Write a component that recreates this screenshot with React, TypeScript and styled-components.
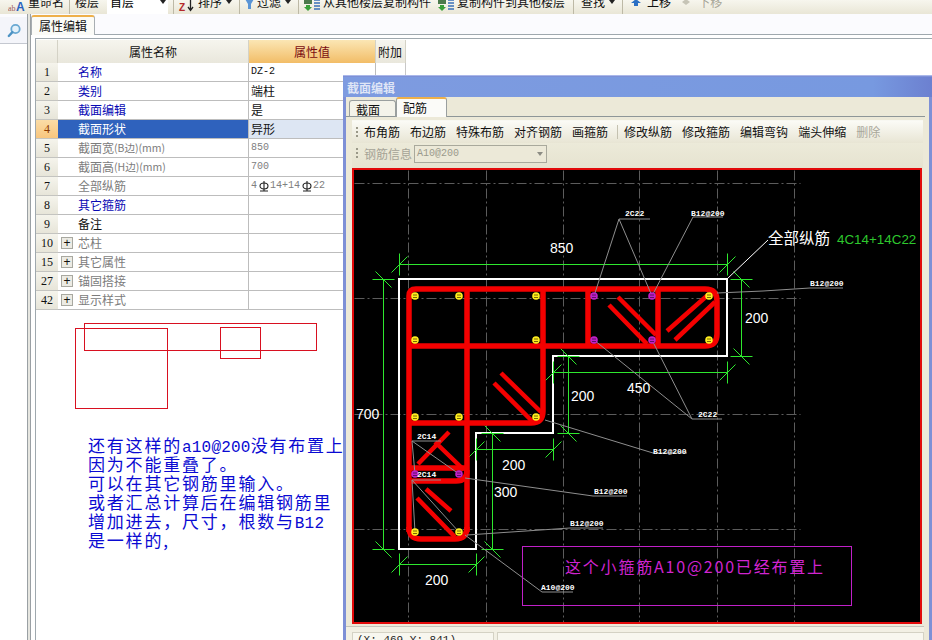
import React from "react";
import styled, { createGlobalStyle } from "styled-components";

const CJK = `"Noto Sans CJK SC", "Liberation Sans", sans-serif`;
const MONO = `"Liberation Mono", "Noto Sans CJK SC", monospace`;

const Global = createGlobalStyle`
  html, body { margin: 0; padding: 0; background: #fff; }
  body { font-family: ${CJK}; font-size: 12px; color: #000; }
  #root { width: 932px; height: 640px; overflow: hidden; }
  * { box-sizing: border-box; }
`;

const Page = styled.div`
  position: relative;
  width: 932px;
  height: 640px;
  overflow: hidden;
  display: flex;
  flex-direction: column;
  background: #fff;
`;

/* ---------- top toolbar (cut off by the top edge of the shot) ---------- */
const TopBar = styled.div`
  flex: none;
  height: 14px;
  display: flex;
  align-items: flex-end;
  overflow: hidden;
  background: linear-gradient(#f7f6ee, #e9e6d6);
`;
const ToolItem = styled.div<{ $ml: number; $off?: boolean }>`
  flex: none;
  height: 24px;
  margin-left: ${(p) => p.$ml}px;
  display: flex;
  align-items: center;
  gap: 3px;
  white-space: nowrap;
  font-size: 12px;
  line-height: 24px;
  color: ${(p) => (p.$off ? "#a8a698" : "#111")};
`;
const ToolSep = styled.div<{ $ml: number }>`
  flex: none;
  width: 1px;
  height: 24px;
  margin-left: ${(p) => p.$ml}px;
  background: #bdb9a6;
`;
const FloorSelect = styled.div`
  flex: none;
  width: 61px;
  height: 24px;
  margin-left: 8px;
  padding-left: 3px;
  background: #fff;
  display: flex;
  align-items: center;
  justify-content: space-between;
  line-height: 24px;
`;
const Caret = styled.span`
  display: inline-block;
  width: 0;
  height: 0;
  margin: 0 2px 0 1px;
  border-left: 3px solid transparent;
  border-right: 3px solid transparent;
  border-top: 4px solid #222;
`;
const ToolLabel = styled.span<{ $gap?: number }>`
  margin-left: ${(p) => p.$gap ?? 0}px;
`;

/* ---------- tab band and body ---------- */
const Body = styled.div`
  flex: 1;
  display: flex;
  min-height: 0;
`;
const SideRail = styled.div`
  flex: none;
  width: 27px;
  background: #fff;
  padding-top: 3px;
  background-image: linear-gradient(#fbfbfe, #fbfbfe);
  background-size: 100% 3px;
  background-repeat: no-repeat;
`;
const SearchBtn = styled.div`
  height: 27px;
  background: #f4f5fa;
  border-bottom: 1px solid #c4c8d0;
  display: flex;
  align-items: center;
  justify-content: center;
  padding-left: 2px;
`;
const RailGap = styled.div`
  flex: none;
  width: 4px;
  background: #e6e6e0;
  border-left: 1px solid #9aa0a4;
  border-right: 1px solid #9aa0a4;
`;
const Workspace = styled.div`
  flex: 1;
  min-width: 0;
  display: flex;
  flex-direction: column;
`;
const TabBand = styled.div`
  flex: none;
  height: 21px;
  padding-top: 1px;
  background: #fbfbfe;
  border-bottom: 1px solid #9fa8ae;
`;
const SheetTab = styled.div`
  width: 64px;
  height: 20px;
  border: 1px solid #a8aeb2;
  border-top: 2px solid #eeb04a;
  border-bottom: none;
  border-radius: 3px 3px 0 0;
  background: #fbfbf7;
  padding-left: 7px;
  font-size: 12px;
  line-height: 17px;
  color: #111;
`;
const Sheet = styled.div`
  flex: 1;
  min-height: 0;
  margin-top: 3px;
  margin-left: 4px;
  border-top: 1px solid #9fa8ae;
  border-left: 1px solid #9fa8ae;
  padding-top: 1px;
  background: #fff;
`;

/* ---------- property grid ---------- */
const Columns = styled.div`
  display: grid;
  grid-template-columns: 22px 191px 127px 30px;
  width: 370px;
`;
const HeaderCell = styled.div<{ $active?: boolean; $left?: boolean }>`
  height: 23px;
  display: flex;
  align-items: center;
  justify-content: ${(p) => (p.$left ? "flex-start" : "center")};
  padding-left: ${(p) => (p.$left ? "2px" : "0")};
  font-size: 12px;
  border-right: 1px solid #d4d2c6;
  color: ${(p) => (p.$active ? "#7a0c10" : "#111")};
  background: ${(p) =>
    p.$active
      ? "linear-gradient(#fbe6b4, #f2bd67)"
      : "linear-gradient(#f6f5ee, #e9e7dc)"};
`;
const Row = styled(Columns)`
  height: 19px;
`;
const NumCell = styled.div<{ $on?: boolean }>`
  font-family: "Liberation Serif", serif;
  font-size: 12px;
  line-height: 18px;
  text-align: center;
  color: ${(p) => (p.$on ? "#8a3a00" : "#111")};
  background: ${(p) =>
    p.$on
      ? "linear-gradient(#fbdca6, #f8c67e)"
      : "linear-gradient(#f5f4ec, #e7e5d9)"};
  border-bottom: 1px solid #c4c4c0;
`;
const NameCell = styled.div<{ $tone: string; $on?: boolean }>`
  display: flex;
  align-items: center;
  padding-left: 3px;
  font-size: 12px;
  line-height: 18px;
  white-space: nowrap;
  border-bottom: 1px solid #bdbdbd;
  border-right: 1px solid #bdbdbd;
  color: ${(p) => (p.$on ? "#fff" : p.$tone)};
  background: ${(p) => (p.$on ? "#2f62bd" : "#fff")};
`;
const NameSuffix = styled.span`
  font-size: 10.5px;
`;
const Expander = styled.span`
  flex: none;
  width: 12px;
  height: 12px;
  margin-right: 5px;
  border: 1px solid #a8a8a0;
  background: #ecebe4;
  display: flex;
  align-items: center;
  justify-content: center;
  font-family: "Liberation Sans", sans-serif;
  font-size: 12px;
  line-height: 10px;
  color: #111;
`;
const NoExpander = styled.span`
  flex: none;
  width: 17px;
`;
const ValueCell = styled.div<{ $muted?: boolean; $on?: boolean }>`
  display: flex;
  align-items: center;
  padding-left: 2px;
  font-family: ${MONO};
  font-size: 10px;
  line-height: 18px;
  white-space: nowrap;
  border-bottom: 1px solid #bdbdbd;
  border-right: 1px solid #bdbdbd;
  color: ${(p) => (p.$muted ? "#808080" : "#111")};
  background: ${(p) => (p.$on ? "#dde6f3" : "#fff")};
`;
const CjkValue = styled.span`
  font-family: ${CJK};
  font-size: 12px;
`;
const ExtraCell = styled.div`
  border-right: 1px solid #c8c8c8;
  border-bottom: 1px solid #c8c8c8;
`;

/* ---------- annotation under the grid ---------- */
const Scribbles = styled.svg`
  display: block;
  margin: 12px 0 0 39px;
`;
const Note = styled.div`
  margin: 26px 0 0 52px;
  font-family: ${CJK};
  font-size: 17px;
  letter-spacing: 1.8px;
  color: #0a0ad2;
  white-space: nowrap;
`;
const NoteLine = styled.div`
  height: 19px;
  line-height: 19px;
`;
const NoteLatin = styled.span`
  font-family: ${MONO};
  font-size: 16px;
  line-height: 0;
  letter-spacing: 0.2px;
`;

/* ---------- floating section editor window ---------- */
const EditorWindow = styled.div`
  position: absolute;
  left: 343px;
  top: 75px;
  width: 589px;
  height: 565px;
  display: flex;
  flex-direction: column;
  overflow: hidden;
  background: #7e90d6;
  padding: 1px 3px 0 3px;
  border-top: 1px solid #aab8ea;
`;
const TitleBar = styled.div`
  flex: none;
  height: 20px;
  margin: 0 -3px;
  padding-left: 4px;
  font-size: 12px;
  font-weight: 700;
  line-height: 22px;
  color: #dfe5f6;
  background: linear-gradient(90deg, #7e9be0 0%, #7799e0 90%, #6c80d0 100%);
`;
const WindowFace = styled.div`
  flex: 1;
  min-height: 0;
  background: #ece9d8;
  padding-right: 3px;
  display: flex;
  flex-direction: column;
`;
const TabStrip = styled.div`
  flex: none;
  height: 20px;
  display: flex;
  align-items: flex-end;
  padding-left: 3px;
  border-bottom: 1px solid #8e9698;
  margin-right: 1px;
`;
const EditorTab = styled.div<{ $on?: boolean }>`
  height: ${(p) => (p.$on ? 20 : 17)}px;
  width: ${(p) => (p.$on ? 51 : 47)}px;
  margin-bottom: -1px;
  padding-left: 6px;
  font-size: 12px;
  line-height: 17px;
  border: 1px solid #9a9f9f;
  border-bottom: ${(p) => (p.$on ? "none" : "1px solid #8e9698")};
  border-top: ${(p) => (p.$on ? "2px solid #eeb04a" : "1px solid #9a9f9f")};
  border-radius: 3px 3px 0 0;
  background: ${(p) => (p.$on ? "#fbfbf8" : "#f4f3ea")};
  color: #111;
`;
const TabPanel = styled.div`
  flex: 1;
  min-height: 0;
  padding: 3px 2px 0 6px;
  background: #ece9d8;
  display: flex;
  flex-direction: column;
`;
const EditorBar = styled.div`
  flex: none;
  height: 23px;
  margin-right: 1px;
  padding-left: 4px;
  display: flex;
  align-items: center;
  background: linear-gradient(#fbfbf6, #e8e5d4);
  border-top: 1px solid #f8f8f2;
`;
const Grip = styled.span`
  flex: none;
  width: 2px;
  height: 13px;
  margin-right: 6px;
  background-image: radial-gradient(circle, #9a9888 1px, transparent 1.1px);
  background-size: 2px 4px;
`;
const BarButton = styled.span<{ $off?: boolean }>`
  flex: none;
  margin-right: 10px;
  font-size: 12px;
  line-height: 20px;
  color: ${(p) => (p.$off ? "#a9a79a" : "#111")};
`;
const BarSep = styled.span`
  flex: none;
  width: 1px;
  height: 14px;
  margin: 0 6px 0 -1px;
  background: #c4c1b0;
`;
const InfoBar = styled.div`
  flex: none;
  height: 25px;
  margin-right: 1px;
  padding: 0 0 4px 4px;
  display: flex;
  align-items: center;
  background: linear-gradient(#ecead9, #e6e3d0);
`;
const InfoLabel = styled.span`
  flex: none;
  width: 50px;
  font-size: 12px;
  color: #a5a396;
`;
const InfoField = styled.div`
  flex: none;
  width: 133px;
  height: 18px;
  padding: 0 3px 0 2px;
  border: 1px solid #a9a99c;
  display: flex;
  align-items: center;
  justify-content: space-between;
  font-family: ${MONO};
  font-size: 10px;
  color: #9a9a8c;
  background: #ece9d8;
`;
const GreyCaret = styled.span`
  width: 0;
  height: 0;
  border-left: 3px solid transparent;
  border-right: 3px solid transparent;
  border-top: 4px solid #8c8c84;
`;
const CanvasFrame = styled.div`
  flex: none;
  width: 570px;
  height: 456px;
  border: 2px solid #e20a0a;
  background: #000;
`;
const CanvasSvg = styled.svg`
  display: block;
`;
const StatusRow = styled.div`
  flex: none;
  height: 16px;
  margin: 2px 0 0 -6px;
  padding: 5px 0 0 6px;
  border-top: 1px solid #c4c4bc;
  display: flex;
  gap: 3px;
  background: #f2f0e4;
`;
const StatusCell = styled.div<{ $grow?: boolean }>`
  ${(p) => (p.$grow ? "flex: 1;" : "flex: none; width: 142px;")}
  height: 20px;
  padding: 1px 0 0 4px;
  font-family: ${MONO};
  font-size: 11px;
  line-height: 12px;
  color: #222;
  border: 1px solid #d4d2c4;
  background: #f8f7ef;
`;
const RebarGlyph = styled.svg`
  flex: none;
  margin: 0 1px 0 2px;
`;

/* ---------- drawing of the toolbar icons (only their lower part shows) ---------- */
const RenameIcon = () => (
  <svg width="17" height="24" viewBox="0 0 17 24">
    <text x="0" y="21" fontSize="8" fill="#a05a5a" fontFamily="Liberation Serif">ab</text>
    <text x="8" y="21" fontSize="12" fontWeight="700" fill="#2a62c0" fontFamily="Liberation Sans">A</text>
  </svg>
);
const SortIcon = () => (
  <svg width="17" height="24" viewBox="0 0 17 24">
    <text x="1" y="21" fontSize="10" fontWeight="700" fill="#b42a2a" fontFamily="Liberation Sans">Z</text>
    <path d="M12.5 8V20M10 17l2.5 3.5L15 17" stroke="#222" strokeWidth="1.3" fill="none" />
  </svg>
);
const FunnelIcon = () => (
  <svg width="9" height="24" viewBox="0 0 9 24">
    <path d="M0 9H9L6 14V19H3V14Z" fill="#5b95d6" />
  </svg>
);
const CopyIcon = () => (
  <svg width="16" height="24" viewBox="0 0 16 24">
    <rect x="0" y="9" width="8" height="5" fill="#4c7a4c" />
    <path d="M2 15h4v2h2l-4 4-4-4h2z" fill="#3aa03a" />
    <path d="M10 10h6M10 13h6M10 16h6M10 19h6" stroke="#3a70b8" strokeWidth="1.6" />
  </svg>
);
const UpIcon = () => (
  <svg width="10" height="24" viewBox="0 0 10 24">
    <path d="M5 9L10 13H7V16H3V13H0Z" fill="#2a6fc4" />
  </svg>
);
const DownIcon = () => (
  <svg width="8" height="24" viewBox="0 0 8 24">
    <path d="M4 9L8 12L4 15L0 12Z" fill="#c6c4b6" />
  </svg>
);
const LensIcon = () => (
  <svg width="15" height="15" viewBox="0 0 15 15">
    <circle cx="8.5" cy="6" r="4.2" fill="#e4f1fa" stroke="#69a8d2" strokeWidth="1.8" />
    <path d="M5.4 9.2L1.8 13" stroke="#4d93c4" strokeWidth="2.4" strokeLinecap="round" />
  </svg>
);
const RebarMark = () => (
  <RebarGlyph width="10" height="11" viewBox="0 0 10 11">
    <ellipse cx="5" cy="5" rx="4" ry="3" fill="none" stroke="#222" strokeWidth="1.1" />
    <path d="M5 0V10M1 10H9" stroke="#222" strokeWidth="1.1" />
  </RebarGlyph>
);

/* ---------- data ---------- */
const BLUE = "#0808b4";
const GREY = "#7c7c7c";
const rows = [
  { n: "1", name: "名称", tone: BLUE, val: "DZ-2" },
  { n: "2", name: "类别", tone: BLUE, val: "端柱", cjk: true },
  { n: "3", name: "截面编辑", tone: BLUE, val: "是", cjk: true },
  { n: "4", name: "截面形状", tone: BLUE, val: "异形", cjk: true, on: true },
  { n: "5", name: "截面宽", suffix: "(B边)(mm)", tone: GREY, val: "850", muted: true },
  { n: "6", name: "截面高", suffix: "(H边)(mm)", tone: GREY, val: "700", muted: true },
  { n: "7", name: "全部纵筋", tone: GREY, val: "rebar", muted: true },
  { n: "8", name: "其它箍筋", tone: BLUE, val: "" },
  { n: "9", name: "备注", tone: "#111", val: "" },
  { n: "10", name: "芯柱", tone: GREY, val: "", group: true },
  { n: "15", name: "其它属性", tone: GREY, val: "", group: true },
  { n: "27", name: "锚固搭接", tone: GREY, val: "", group: true },
  { n: "42", name: "显示样式", tone: GREY, val: "", group: true },
];

const leftButtons = ["布角筋", "布边筋", "特殊布筋", "对齐钢筋", "画箍筋"];
const rightButtons = ["修改纵筋", "修改箍筋", "编辑弯钩", "端头伸缩"];

/* ---------- the CAD drawing, in page coordinates ---------- */
const G = "#2ee82e";
const hDims: [number, number, number][] = [
  [399, 727, 264],
  [553, 727, 372],
  [476, 553, 449],
  [399, 476, 564],
];
const vDims: [number, number, number][] = [
  [383, 279, 549],
  [741, 279, 356],
  [568, 356, 433],
  [492, 433, 549],
];
const dimTexts: [string, number, number][] = [
  ["850", 550, 253],
  ["200", 745, 323],
  ["200", 571, 401],
  ["450", 627, 393],
  ["700", 356, 419],
  ["200", 502, 470],
  ["300", 494, 497],
  ["200", 425, 585],
];
const leaders: string[] = [
  "M594 296L619 219M652 296L619 219M619 219H650",
  "M652 296L693 217H723",
  "M717 293L763 291L810 288H843",
  "M594 340L692 419H722M652 340L692 419",
  "M545 420L653 453H687",
  "M465 478L593 496H627",
  "M467 535L570 528H603",
  "M465 535L542 592H573",
  "M412 441H441M412 441L459 474M412 441L415 474",
  "M412 480H441M412 480L415 532M412 480L459 532",
];
const labels: [string, number, number][] = [
  ["2C22", 625, 216],
  ["B12@200", 691, 216],
  ["B12@200", 810, 286],
  ["2C22", 698, 417],
  ["B12@200", 653, 454],
  ["B12@200", 594, 494],
  ["B12@200", 570, 526],
  ["A10@200", 541, 590],
  ["2C14", 417, 439],
  ["2C14", 417, 477],
];
const yellow: [number, number][] = [
  [415, 296], [459, 296], [536, 296], [709, 296],
  [415, 340], [536, 340], [709, 340],
  [415, 417], [459, 417], [536, 417],
  [415, 532], [459, 532],
];
const purple: [number, number][] = [
  [594, 296], [652, 296], [594, 340], [652, 340], [415, 474], [459, 474],
];

const CadDrawing = () => (
  <CanvasSvg width="566" height="452" viewBox="354 170 566 452">
    {/* grid */}
    <g stroke="#5c5c5c" strokeWidth="1" strokeDasharray="10 3 2 3" fill="none" transform="translate(0.5 0.5)">
      {[408, 486, 563, 639, 717, 794].map((x) => (
        <line key={x} x1={x} y1="170" x2={x} y2="622" />
      ))}
      {[183, 298, 414, 529].map((y) => (
        <line key={y} x1="354" y1={y} x2="800" y2={y} />
      ))}
    </g>

    {/* concrete outline */}
    <path
      d="M399 279H727V356H553V433H476V549H399Z"
      fill="none"
      stroke="#fff"
      strokeWidth="2"
      strokeLinejoin="miter"
    />

    {/* dimension lines */}
    <g stroke={G} strokeWidth="1" fill="none" transform="translate(0.5 0.5)">
      {hDims.map(([a, b, y]) => (
        <g key={`h${a}${y}`}>
          <line x1={a} y1={y} x2={b} y2={y} />
          {[a, b].map((x) => (
            <path key={x} d={`M${x} ${y - 11}V${y + 11}M${x - 8} ${y + 8}L${x + 8} ${y - 8}`} />
          ))}
        </g>
      ))}
      {vDims.map(([x, a, b]) => (
        <g key={`v${x}`}>
          <line x1={x} y1={a} x2={x} y2={b} />
          {[a, b].map((y) => (
            <path key={y} d={`M${x - 11} ${y}H${x + 11}M${x - 8} ${y - 8}L${x + 8} ${y + 8}`} />
          ))}
        </g>
      ))}
    </g>

    {/* stirrups */}
    <g stroke="#f40000" strokeWidth="5.5" fill="none" strokeLinejoin="round">
      <path d="M409 532V296Q409 289 416 289H705Q717 289 717 301V334Q717 346 705 346H409" />
      <path d="M467 289V532" />
      <path d="M543 289V411Q543 423 531 423H409" />
      <path d="M588 289V346M658 289V346" />
      <path d="M409 527Q409 539 421 539H455Q467 539 467 527" />
      <path d="M409 468H465" />
      <path d="M409 481H456Q467 481 467 470" />
    </g>
    <g stroke="#f40000" strokeWidth="4.5" fill="none">
      <path d="M501 373L541 412M494 383L532 421" />
      <path d="M618 297L656 335M609 305L647 344" />
      <path d="M667 331L709 294M675 340L715 302" />
      <path d="M449 432L418 464M435 442L464 470" />
      <path d="M426 489L451 511M417 498L455 537" />
    </g>

    {/* leaders */}
    <g stroke="#8e8e8e" strokeWidth="1" fill="none">
      {leaders.map((d) => (
        <path key={d} d={d} />
      ))}
    </g>
    <path d="M727 279L768 240" stroke="#fff" strokeWidth="1" fill="none" />

    {/* rebars */}
    {yellow.map(([x, y]) => (
      <g key={`y${x}${y}`}>
        <circle cx={x} cy={y} r="3.8" fill="#ffee1e" />
        <path d={`M${x - 2} ${y - 1}H${x + 2}M${x - 2} ${y + 1.5}H${x + 2}`} stroke="#6a5a00" strokeWidth="0.9" />
      </g>
    ))}
    {purple.map(([x, y]) => (
      <g key={`p${x}${y}`}>
        <circle cx={x} cy={y} r="3.8" fill="#c020c8" />
        <path d={`M${x - 2} ${y - 1}H${x + 2}M${x - 2} ${y + 1.5}H${x + 2}`} stroke="#50105a" strokeWidth="0.9" />
      </g>
    ))}

    {/* labels */}
    <g fill="#fff" fontFamily="Liberation Mono, monospace" fontSize="8" fontWeight="700">
      {labels.map(([t, x, y]) => (
        <text key={`${t}${x}${y}`} x={x} y={y}>
          {t}
        </text>
      ))}
    </g>
    <g fill="#fff" fontFamily="Liberation Sans, sans-serif" fontSize="14">
      {dimTexts.map(([t, x, y]) => (
        <text key={`${t}${x}${y}`} x={x} y={y}>
          {t}
        </text>
      ))}
    </g>
    <text x="768" y="244" fill="#fff" fontFamily="Noto Sans CJK SC, sans-serif" fontSize="15.5">
      全部纵筋
    </text>
    <text x="837" y="244" fill="#2ec82e" fontFamily="Liberation Sans, sans-serif" fontSize="13.4">
      4C14+14C22
    </text>

    {/* magenta remark */}
    <rect x="522.5" y="546.5" width="329" height="59" fill="none" stroke="#c020c8" strokeWidth="1" />
    <text
      x="565"
      y="573"
      fill="#d024d0"
      fontFamily="Noto Sans CJK SC, sans-serif"
      fontSize="16"
      letterSpacing="1.8"
    >
      这个小箍筋A10@200已经布置上
    </text>
  </CanvasSvg>
);

export default function App() {
  return (
    <Page>
      <Global />
      <TopBar>
        <ToolItem $ml={8}><RenameIcon /><span>重命名</span></ToolItem>
        <ToolSep $ml={5} />
        <ToolItem $ml={5}>楼层</ToolItem>
        <FloorSelect>首层<Caret /></FloorSelect>
        <ToolSep $ml={5} />
        <ToolItem $ml={4}><SortIcon /><span>排序</span><Caret /></ToolItem>
        <ToolSep $ml={5} />
        <ToolItem $ml={5}><FunnelIcon /><span>过滤</span><Caret /></ToolItem>
        <ToolSep $ml={5} />
        <ToolItem $ml={5}><CopyIcon /><span>从其他楼层复制构件</span></ToolItem>
        <ToolItem $ml={7}><CopyIcon /><span>复制构件到其他楼层</span></ToolItem>
        <ToolSep $ml={8} />
        <ToolItem $ml={7}><span>查找</span><Caret /></ToolItem>
        <ToolSep $ml={5} />
        <ToolItem $ml={8}><UpIcon /><ToolLabel $gap={3}>上移</ToolLabel></ToolItem>
        <ToolItem $ml={11} $off><DownIcon /><ToolLabel $gap={5}>下移</ToolLabel></ToolItem>
      </TopBar>

      <Body>
        <SideRail>
          <SearchBtn><LensIcon /></SearchBtn>
        </SideRail>
        <RailGap />
        <Workspace>
          <TabBand>
            <SheetTab>属性编辑</SheetTab>
          </TabBand>
          <Sheet>
            <Columns>
              <HeaderCell />
              <HeaderCell>属性名称</HeaderCell>
              <HeaderCell $active>属性值</HeaderCell>
              <HeaderCell $left>附加</HeaderCell>
            </Columns>
            {rows.map((r) => (
              <Row key={r.n}>
                <NumCell $on={r.on}>{r.n}</NumCell>
                <NameCell $tone={r.tone} $on={r.on}>
                  {r.group ? <Expander>+</Expander> : <NoExpander />}
                  {r.name}
                  {r.suffix && <NameSuffix>{r.suffix}</NameSuffix>}
                </NameCell>
                <ValueCell $muted={r.muted} $on={r.on}>
                  {r.val === "rebar" ? (
                    <>4<RebarMark />14+14<RebarMark />22</>
                  ) : r.cjk ? (
                    <CjkValue>{r.val}</CjkValue>
                  ) : (
                    r.val
                  )}
                </ValueCell>
                <ExtraCell />
              </Row>
            ))}
            <Scribbles width="244" height="87" viewBox="75 321 244 87">
              <g fill="none" stroke="#d81020" strokeWidth="1">
                <rect x="84.5" y="322.5" width="232" height="27" />
                <rect x="75.5" y="327.5" width="92" height="80" />
                <rect x="220.5" y="326.5" width="40" height="31" />
              </g>
            </Scribbles>
            <Note>
              <NoteLine>还有这样的<NoteLatin>a10@200</NoteLatin>没有布置上</NoteLine>
              <NoteLine>因为不能重叠了。</NoteLine>
              <NoteLine>可以在其它钢筋里输入。</NoteLine>
              <NoteLine>或者汇总计算后在编辑钢筋里</NoteLine>
              <NoteLine>增加进去，尺寸，根数与<NoteLatin>B12</NoteLatin></NoteLine>
              <NoteLine>是一样的,</NoteLine>
            </Note>
          </Sheet>
        </Workspace>
      </Body>

      <EditorWindow>
        <TitleBar>截面编辑</TitleBar>
        <WindowFace>
          <TabStrip>
            <EditorTab>截面</EditorTab>
            <EditorTab $on>配筋</EditorTab>
          </TabStrip>
          <TabPanel>
            <EditorBar>
              <Grip />
              {leftButtons.map((b) => (
                <BarButton key={b}>{b}</BarButton>
              ))}
              <BarSep />
              {rightButtons.map((b) => (
                <BarButton key={b}>{b}</BarButton>
              ))}
              <BarButton $off>删除</BarButton>
            </EditorBar>
            <InfoBar>
              <Grip />
              <InfoLabel>钢筋信息</InfoLabel>
              <InfoField>
                A10@200
                <GreyCaret />
              </InfoField>
            </InfoBar>
            <CanvasFrame>
              <CadDrawing />
            </CanvasFrame>
            <StatusRow>
              <StatusCell>(X: 469 Y: 841)</StatusCell>
              <StatusCell $grow />
            </StatusRow>
          </TabPanel>
        </WindowFace>
      </EditorWindow>
    </Page>
  );
}
